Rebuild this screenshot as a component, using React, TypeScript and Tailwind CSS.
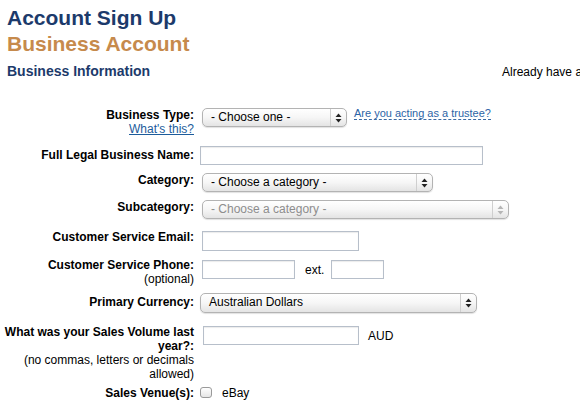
import React from 'react';

function Arrows({ disabled = false }: { disabled?: boolean }) {
  return (
    <svg width="7" height="10" viewBox="0 0 7 10" className={disabled ? 'text-[#b5b5b5]' : 'text-[#222]'}>
      <path d="M0.5 4 L3.5 0.5 L6.5 4 Z" fill="currentColor" />
      <path d="M0.5 6 L3.5 9.5 L6.5 6 Z" fill="currentColor" />
    </svg>
  );
}

function FakeSelect({
  value,
  className,
  disabled = false,
}: {
  value: string;
  className: string;
  disabled?: boolean;
}) {
  return (
    <div
      className={`flex items-stretch rounded-[5px] border border-[#b3b3b3] bg-gradient-to-b from-white via-[#f6f6f6] to-[#e4e4e4] shadow-[0_1px_1px_rgba(0,0,0,0.12)] ${className}`}
    >
      <span className={`flex-1 truncate pl-[8px] text-[12px] leading-[17px] ${disabled ? 'text-[#8d8d8d]' : 'text-black'}`}>
        {value}
      </span>
      <span className="flex w-[16px] items-center justify-center border-l border-[#cfcfcf]">
        <Arrows disabled={disabled} />
      </span>
    </div>
  );
}

function TextBox({ className }: { className: string }) {
  return (
    <input
      type="text"
      className={`border border-[#b7bfca] bg-white shadow-[inset_0_1px_1px_rgba(0,0,0,0.08)] outline-none ${className}`}
    />
  );
}

function Label({ children, className = '' }: { children: React.ReactNode; className?: string }) {
  return <div className={`w-[187px] shrink-0 text-right text-[12px] leading-[14px] ${className}`}>{children}</div>;
}

export default function App() {
  return (
    <div
      className="h-[402px] w-[580px] overflow-hidden bg-white pl-[7px] pt-[5px] text-black"
      style={{ fontFamily: '"Liberation Sans", Arial, Helvetica, sans-serif' }}
    >
      <h1 className="text-[21px] font-bold leading-[26px] text-[#1c3a6b]">Account Sign Up</h1>
      <h2 className="text-[21px] font-bold leading-[26px] text-[#c68a4c]">Business Account</h2>

      <div className="mt-[6px] flex items-baseline whitespace-nowrap">
        <h3 className="w-[495px] shrink-0 text-[14px] font-bold leading-[16px] text-[#1c3a6b]">Business Information</h3>
        <span className="shrink-0 text-[12px] leading-[16px]">Already have an account? Log In</span>
      </div>

      <div className="mt-[28px] flex flex-col">
        {/* Business type */}
        <div className="flex h-[38px] items-start gap-[8px]">
          <Label>
            <div className="font-bold">Business Type:</div>
            <a href="#" className="text-[#1d5c9b] underline">What's this?</a>
          </Label>
          <FakeSelect value="- Choose one -" className="h-[19px] w-[145px]" />
          <a
            href="#"
            className="ml-[-1px] mt-[-1px] border-b border-dashed border-[#3a6aa5] text-[11px] leading-[12px] text-[#2c64a6]"
          >
            Are you acting as a trustee?
          </a>
        </div>

        {/* Legal name */}
        <div className="flex h-[27px] items-start gap-[6px]">
          <Label className="pt-[2px] font-bold">Full Legal Business Name:</Label>
          <TextBox className="h-[19px] w-[283px]" />
        </div>

        {/* Category */}
        <div className="flex h-[27px] items-start gap-[8px]">
          <Label className="font-bold">Category:</Label>
          <FakeSelect value="- Choose a category -" className="h-[19px] w-[231px]" />
        </div>

        {/* Subcategory */}
        <div className="flex h-[30px] items-start gap-[8px]">
          <Label className="font-bold">Subcategory:</Label>
          <FakeSelect value="- Choose a category -" className="h-[19px] w-[307px]" disabled />
        </div>

        {/* Email */}
        <div className="flex h-[28px] items-start gap-[8px]">
          <Label className="font-bold">Customer Service Email:</Label>
          <TextBox className="mt-[1px] h-[20px] w-[157px]" />
        </div>

        {/* Phone */}
        <div className="flex h-[35px] items-start gap-[8px]">
          <Label>
            <div className="font-bold">Customer Service Phone:</div>
            <div>(optional)</div>
          </Label>
          <TextBox className="mt-[2px] h-[19px] w-[93px]" />
          <span className="ml-[2px] mt-[5px] text-[12px] leading-[14px]">ext.</span>
          <TextBox className="ml-[-1px] mt-[2px] h-[19px] w-[53px]" />
        </div>

        {/* Currency */}
        <div className="flex h-[32px] items-start gap-[6px]">
          <Label className="pt-[2px] font-bold">Primary Currency:</Label>
          <FakeSelect value="Australian Dollars" className="h-[20px] w-[277px]" />
        </div>

        {/* Sales volume */}
        <div className="flex h-[61px] items-start gap-[9px]">
          <div className="ml-[-7px] w-[194px] shrink-0 text-right text-[12px] leading-[14px]">
            <div className="font-bold">
              What was your Sales Volume last
              <br />
              year?:
            </div>
            <div>
              (no commas, letters or decimals
              <br />
              allowed)
            </div>
          </div>
          <TextBox className="mt-[1px] h-[19px] w-[156px]" />
          <span className="mt-[4px] text-[12px] leading-[14px]">AUD</span>
        </div>

        {/* Sales venue */}
        <div className="flex items-start gap-[6px]">
          <Label className="font-bold">Sales Venue(s):</Label>
          <span className="mt-[1px] h-[11px] w-[12px] rounded-[3px] border border-[#9a9a9a] bg-gradient-to-b from-white to-[#e6e6e6]" />
          <span className="ml-[4px] text-[12px] leading-[14px]">eBay</span>
        </div>
      </div>
    </div>
  );
}
